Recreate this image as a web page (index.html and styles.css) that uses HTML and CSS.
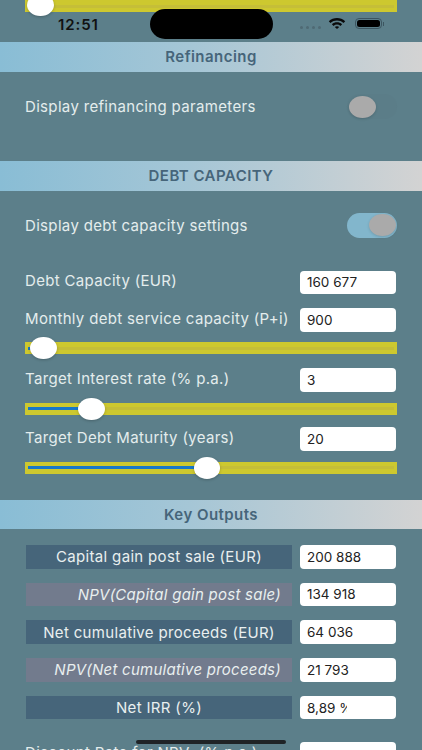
FILE: index.html
```html
<!DOCTYPE html>
<html lang="en">
<head>
<meta charset="utf-8">
<title>Debt capacity</title>
<link rel="stylesheet" href="styles.css">
</head>
<body>
<main class="screen">
  <div class="slider slider-top"><div class="rail"></div><div class="thumb" style="left:2px"></div></div>

  <h2 class="band band-refi">Refinancing</h2>
  <div class="switch-row switch-refi">
    <span class="label">Display refinancing parameters</span>
    <span class="switch"><span class="knob"></span></span>
  </div>

  <h2 class="band band-debt">DEBT CAPACITY</h2>
  <div class="switch-row switch-debt">
    <span class="label">Display debt capacity settings</span>
    <span class="switch on"><span class="knob"></span></span>
  </div>

  <div class="field field-first"><span class="label">Debt Capacity (EUR)</span><div class="value">160 677</div></div>
  <div class="field field-next"><span class="label">Monthly debt service capacity (P+i)</span><div class="value">900</div></div>
  <div class="slider slider-a"><div class="rail"><div class="fill" style="width:8px"></div></div><div class="thumb" style="left:5px"></div></div>
  <div class="field field-b"><span class="label">Target Interest rate (% p.a.)</span><div class="value">3</div></div>
  <div class="slider slider-b"><div class="rail"><div class="fill" style="width:52px"></div></div><div class="thumb" style="left:53px"></div></div>
  <div class="field field-c"><span class="label">Target Debt Maturity (years)</span><div class="value">20</div></div>
  <div class="slider slider-b"><div class="rail"><div class="fill" style="width:168px"></div></div><div class="thumb" style="left:168.5px"></div></div>

  <h2 class="band band-key">Key Outputs</h2>
  <div class="outputs">
    <div class="field"><span class="tag">Capital gain post sale (EUR)</span><div class="value">200 888</div></div>
    <div class="field"><span class="tag tag-npv">NPV(Capital gain post sale)</span><div class="value">134 918</div></div>
    <div class="field"><span class="tag">Net cumulative proceeds (EUR)</span><div class="value">64 036</div></div>
    <div class="field"><span class="tag tag-npv">NPV(Net cumulative proceeds)</span><div class="value">21 793</div></div>
    <div class="field"><span class="tag">Net IRR (%)</span><div class="value"><span class="clip">8,89 %</span></div></div>
  </div>
  <div class="field field-discount"><span class="label">Discount Rate for NPV  (% p.a.)</span><div class="value"></div></div>
</main>

<div class="status">
  <span class="time">12:51</span>
  <span class="island"></span>
  <span class="signal"><i></i><i></i><i></i><i></i></span>
  <svg class="wifi" viewBox="0 0 18 12" width="18" height="12" aria-hidden="true">
    <path d="M0.8 4.2C5.4 0 12.6 0 17.2 4.2L15.6 5.9C11.9 2.6 6.1 2.6 2.4 5.9Z" fill="#0a0a0a"/>
    <path d="M3.9 7.2C6.9 4.6 11.1 4.6 14.1 7.2L12.5 8.9C10.4 7.1 7.6 7.1 5.5 8.9Z" fill="#0a0a0a"/>
    <path d="M6.8 10C8 9.1 10 9.1 11.2 10L9 12Z" fill="#0a0a0a"/>
  </svg>
  <span class="battery"><span class="cell"></span></span>
</div>
<div class="home"></div>
</body>
</html>
```

FILE: styles.css
```css
* { box-sizing: border-box; }
html, body { margin: 0; padding: 0; }
body {
  width: 422px;
  height: 750px;
  overflow: hidden;
  position: relative;
  background: #5c7f8a;
  font-family: Inter, "Liberation Sans", sans-serif;
}
.screen { height: 750px; overflow: hidden; }

.band {
  margin: 0;
  height: 29.5px;
  display: flex;
  align-items: center;
  justify-content: center;
  font-size: 15px;
  font-weight: 600;
  letter-spacing: .45px;
  color: #46657a;
  background: linear-gradient(90deg, #89bdd5 0%, #a5c6d6 45%, #d3d3d3 100%);
}
.band-refi { margin-top: 30px; }
.band-key { margin-top: 26px; }

.label { font-size: 15px; letter-spacing: .33px; color: #e4eded; white-space: pre; }

.switch-row {
  display: flex;
  align-items: center;
  justify-content: space-between;
  padding: 0 25px;
  height: 25px;
}
.switch-refi { margin-top: 22.5px; margin-bottom: 42px; }
.switch-debt { margin-top: 22px; }
.switch {
  width: 50px;
  height: 25px;
  border-radius: 13px;
  background: #5b7d88;
  display: flex;
  align-items: center;
  padding: 0 1.5px;
}
.switch.on { background: #82b6cc; justify-content: flex-end; }
.knob {
  width: 27px;
  height: 22px;
  border-radius: 50%;
  background: #aaaaaa;
  box-shadow: 0 1px 3px rgba(0, 0, 0, .15);
}

.field {
  display: flex;
  align-items: center;
  justify-content: space-between;
  padding: 0 26px 0 25px;
  height: 23.5px;
}
.field .label { margin-bottom: 3px; }
.field-first { margin-top: 33px; }
.field-next { margin-top: 14px; }
.field-b { margin-top: 14px; }
.field-c { margin-top: 12.5px; }
.field-discount { margin-top: 23px; }

.value {
  width: 96px;
  height: 100%;
  padding-left: 7px;
  display: flex;
  align-items: center;
  background: #fff;
  border-radius: 4px;
  font-size: 13.5px;
  color: #222;
}
.clip { width: 40px; overflow: hidden; white-space: nowrap; }

.slider { position: relative; height: 12px; margin: 0 25px; }
.slider-a { margin-top: 10.5px; }
.slider-b { margin-top: 11px; }
.rail {
  height: 100%;
  background: #cdc82f;
  padding: 4.5px 3px;
}
.rail::before {
  content: "";
  display: block;
  height: 3px;
  background: #c5be38;
}
.fill {
  position: absolute;
  left: 3px;
  top: 4.5px;
  height: 3px;
  background: #1777c9;
}
.thumb {
  position: absolute;
  top: -5px;
  width: 26.5px;
  height: 22px;
  border-radius: 50%;
  background: #fff;
  box-shadow: 0 1px 3px rgba(0, 0, 0, .22);
}
.slider-top .thumb { top: -6px; }

.outputs {
  display: flex;
  flex-direction: column;
  gap: 14.2px;
  margin-top: 16px;
}
.outputs .field { padding-left: 26px; }
.tag {
  width: 266px;
  height: 100%;
  display: flex;
  align-items: center;
  justify-content: center;
  background: #46657a;
  font-size: 15px;
  letter-spacing: .33px;
  color: #e9efef;
}
.tag-npv {
  justify-content: flex-end;
  padding-right: 11px;
  background: #727b8d;
  font-style: italic;
  letter-spacing: .25px;
}

.status { position: absolute; inset: 0 0 auto 0; height: 48px; }
.time {
  position: absolute;
  left: 58px;
  top: 15.5px;
  font-size: 15px;
  font-weight: 600;
  letter-spacing: .9px;
  line-height: 18px;
  color: #111;
}
.island {
  position: absolute;
  left: 150px;
  top: 9px;
  width: 123px;
  height: 30px;
  border-radius: 15px;
  background: #000;
}
.signal { position: absolute; left: 300px; top: 26px; display: flex; gap: 3px; }
.signal i { width: 3px; height: 3px; border-radius: 50%; background: #4f6a74; }
.wifi { position: absolute; left: 328px; top: 17px; }
.battery {
  position: absolute;
  left: 355px;
  top: 18px;
  width: 27px;
  height: 11px;
  border: 1px solid #3c5560;
  border-radius: 4px;
  padding: 1px;
}
.battery::after {
  content: "";
  position: absolute;
  right: -3px;
  top: 2.5px;
  width: 1.5px;
  height: 4px;
  background: #3c5560;
}
.cell { display: block; height: 100%; background: #000; border-radius: 2.5px; }

.home {
  position: absolute;
  left: 136px;
  top: 739.5px;
  width: 150px;
  height: 4px;
  border-radius: 2px;
  background: #1f2326;
}
```
